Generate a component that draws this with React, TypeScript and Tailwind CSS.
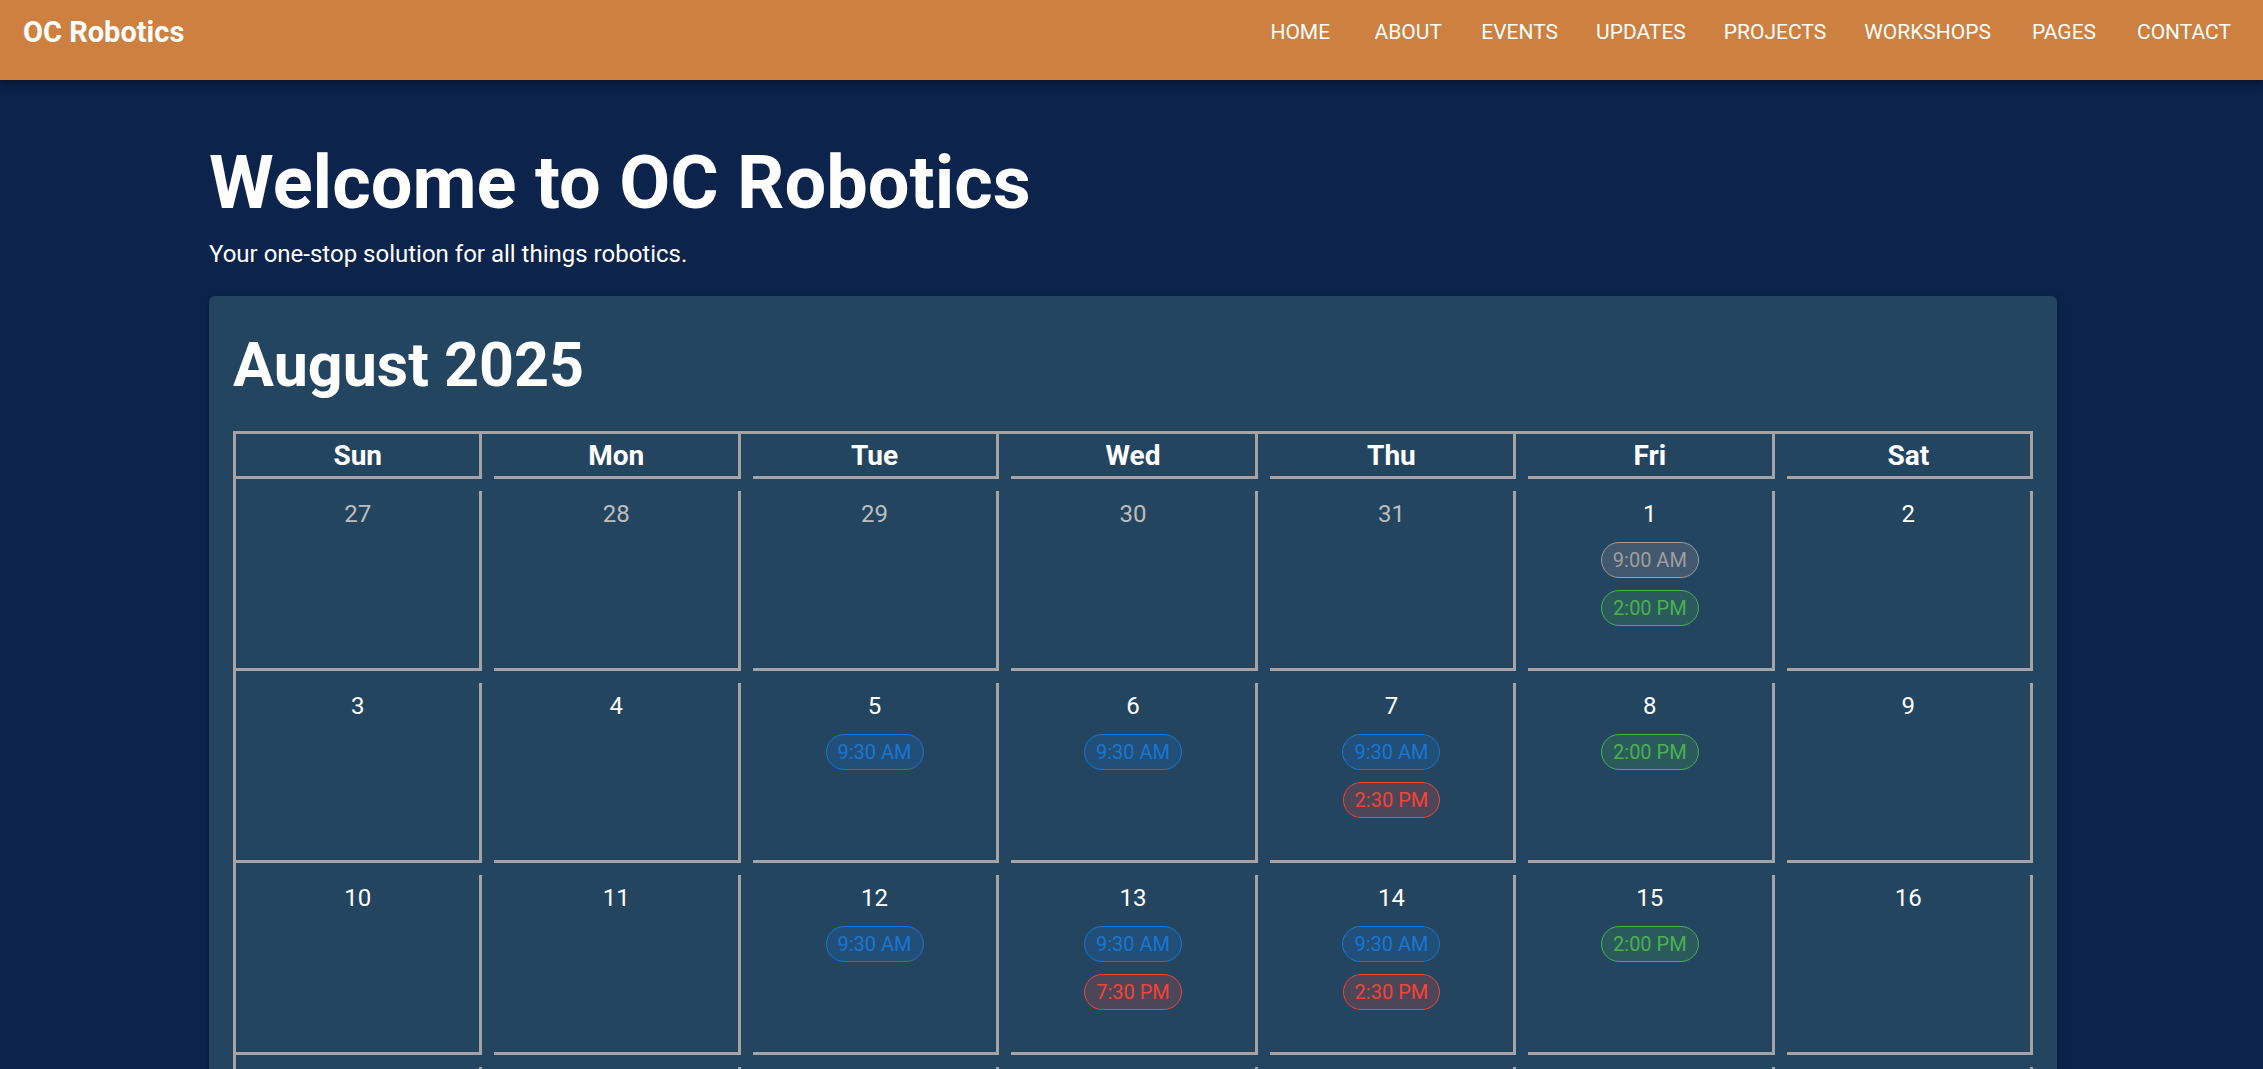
type Tone = "gray" | "green" | "blue" | "red";

type CalendarEvent = { time: string; tone: Tone };

type Day = { date: number; muted?: boolean; events?: CalendarEvent[] };

const navItems = ["Home", "About", "Events", "Updates", "Projects", "Workshops", "Pages", "Contact"];

const weekdays = ["Sun", "Mon", "Tue", "Wed", "Thu", "Fri", "Sat"];

const toneClasses: Record<Tone, string> = {
  gray: "border-[#9e9e9e] bg-[#42586e] text-[#9e9e9e]",
  green: "border-[#4caf50] bg-[#2b5a5d] text-[#4caf50]",
  blue: "border-[#1976d2] bg-[#224f78] text-[#1976d2]",
  red: "border-[#f44336] bg-[#4d4558] text-[#f44336]",
};

const class930: CalendarEvent = { time: "9:30 AM", tone: "blue" };
const open200: CalendarEvent = { time: "2:00 PM", tone: "green" };
const meet230: CalendarEvent = { time: "2:30 PM", tone: "red" };

const weeks: Day[][] = [
  [
    { date: 27, muted: true },
    { date: 28, muted: true },
    { date: 29, muted: true },
    { date: 30, muted: true },
    { date: 31, muted: true },
    { date: 1, events: [{ time: "9:00 AM", tone: "gray" }, open200] },
    { date: 2 },
  ],
  [
    { date: 3 },
    { date: 4 },
    { date: 5, events: [class930] },
    { date: 6, events: [class930] },
    { date: 7, events: [class930, meet230] },
    { date: 8, events: [open200] },
    { date: 9 },
  ],
  [
    { date: 10 },
    { date: 11 },
    { date: 12, events: [class930] },
    { date: 13, events: [class930, { time: "7:30 PM", tone: "red" }] },
    { date: 14, events: [class930, meet230] },
    { date: 15, events: [open200] },
    { date: 16 },
  ],
  [17, 18, 19, 20, 21, 22, 23].map((date) => ({ date })),
];

function Header() {
  return (
    <header className="relative flex h-20 items-start justify-between bg-[#cd8040] pr-[19px] pl-[23px] shadow-[0_3px_6px_-1px_rgba(0,0,0,0.2),0_6px_8px_rgba(0,0,0,0.14),0_2px_15px_rgba(0,0,0,0.12)]">
      <a href="#" className="text-[29px] leading-[65px] font-bold">
        OC Robotics
      </a>
      <nav className="flex gap-3">
        {navItems.map((item) => (
          <button key={item} type="button" className="min-w-24 px-[13px] text-[21px] leading-[65px] uppercase">
            {item}
          </button>
        ))}
      </nav>
    </header>
  );
}

function EventPill({ time, tone }: CalendarEvent) {
  return (
    <button
      type="button"
      className={`flex h-9 items-center rounded-full border px-[11px] pb-px text-[20px] leading-none ${toneClasses[tone]}`}
    >
      {time}
    </button>
  );
}

function DayCell({ date, muted, events = [] }: Day) {
  return (
    <td className="flex h-45 flex-col items-center gap-3 border-r-3 border-b-3 border-[#a5a3a3] pt-2">
      <span className={`h-[31px] text-[24px] leading-[30px] ${muted ? "text-[#bdbdbd]" : "text-white"}`}>{date}</span>
      {events.map((event) => (
        <EventPill key={event.time} {...event} />
      ))}
    </td>
  );
}

function Calendar() {
  return (
    <section className="mt-6 rounded-md bg-[#234560] p-6 shadow-[0_3px_2px_-2px_rgba(0,0,0,0.2),0_2px_2px_rgba(0,0,0,0.14),0_2px_12px_rgba(0,0,0,0.12)]">
      <h2 id="month" className="mt-2 text-[61px] leading-[75px] font-bold">
        August 2025
      </h2>
      <table aria-labelledby="month" className="mt-7 block border-t-3 border-l-3 border-[#a5a3a3]">
        <thead className="block">
          <tr className="grid grid-cols-7 gap-x-3">
            {weekdays.map((day) => (
              <th
                key={day}
                scope="col"
                className="h-[45px] border-r-3 border-b-3 border-[#a5a3a3] text-[28px] leading-[44px] font-bold"
              >
                {day}
              </th>
            ))}
          </tr>
        </thead>
        <tbody className="block">
          {weeks.map((week) => (
            <tr key={week[0].date} className="mt-3 grid grid-cols-7 gap-x-3">
              {week.map((day) => (
                <DayCell key={day.date} {...day} />
              ))}
            </tr>
          ))}
        </tbody>
      </table>
    </section>
  );
}

export default function App() {
  return (
    <div className="h-screen overflow-x-hidden overflow-y-auto bg-[#0c234b] font-['Roboto',sans-serif] text-white [scrollbar-width:none]">
      <Header />
      <main className="mx-auto max-w-[1851px] pt-15 pb-6 pl-[3px]">
        <h1 className="text-[74px] leading-[86px] font-bold">Welcome to OC Robotics</h1>
        <p className="mt-[10px] text-[24px] leading-9">Your one-stop solution for all things robotics.</p>
        <Calendar />
      </main>
    </div>
  );
}
